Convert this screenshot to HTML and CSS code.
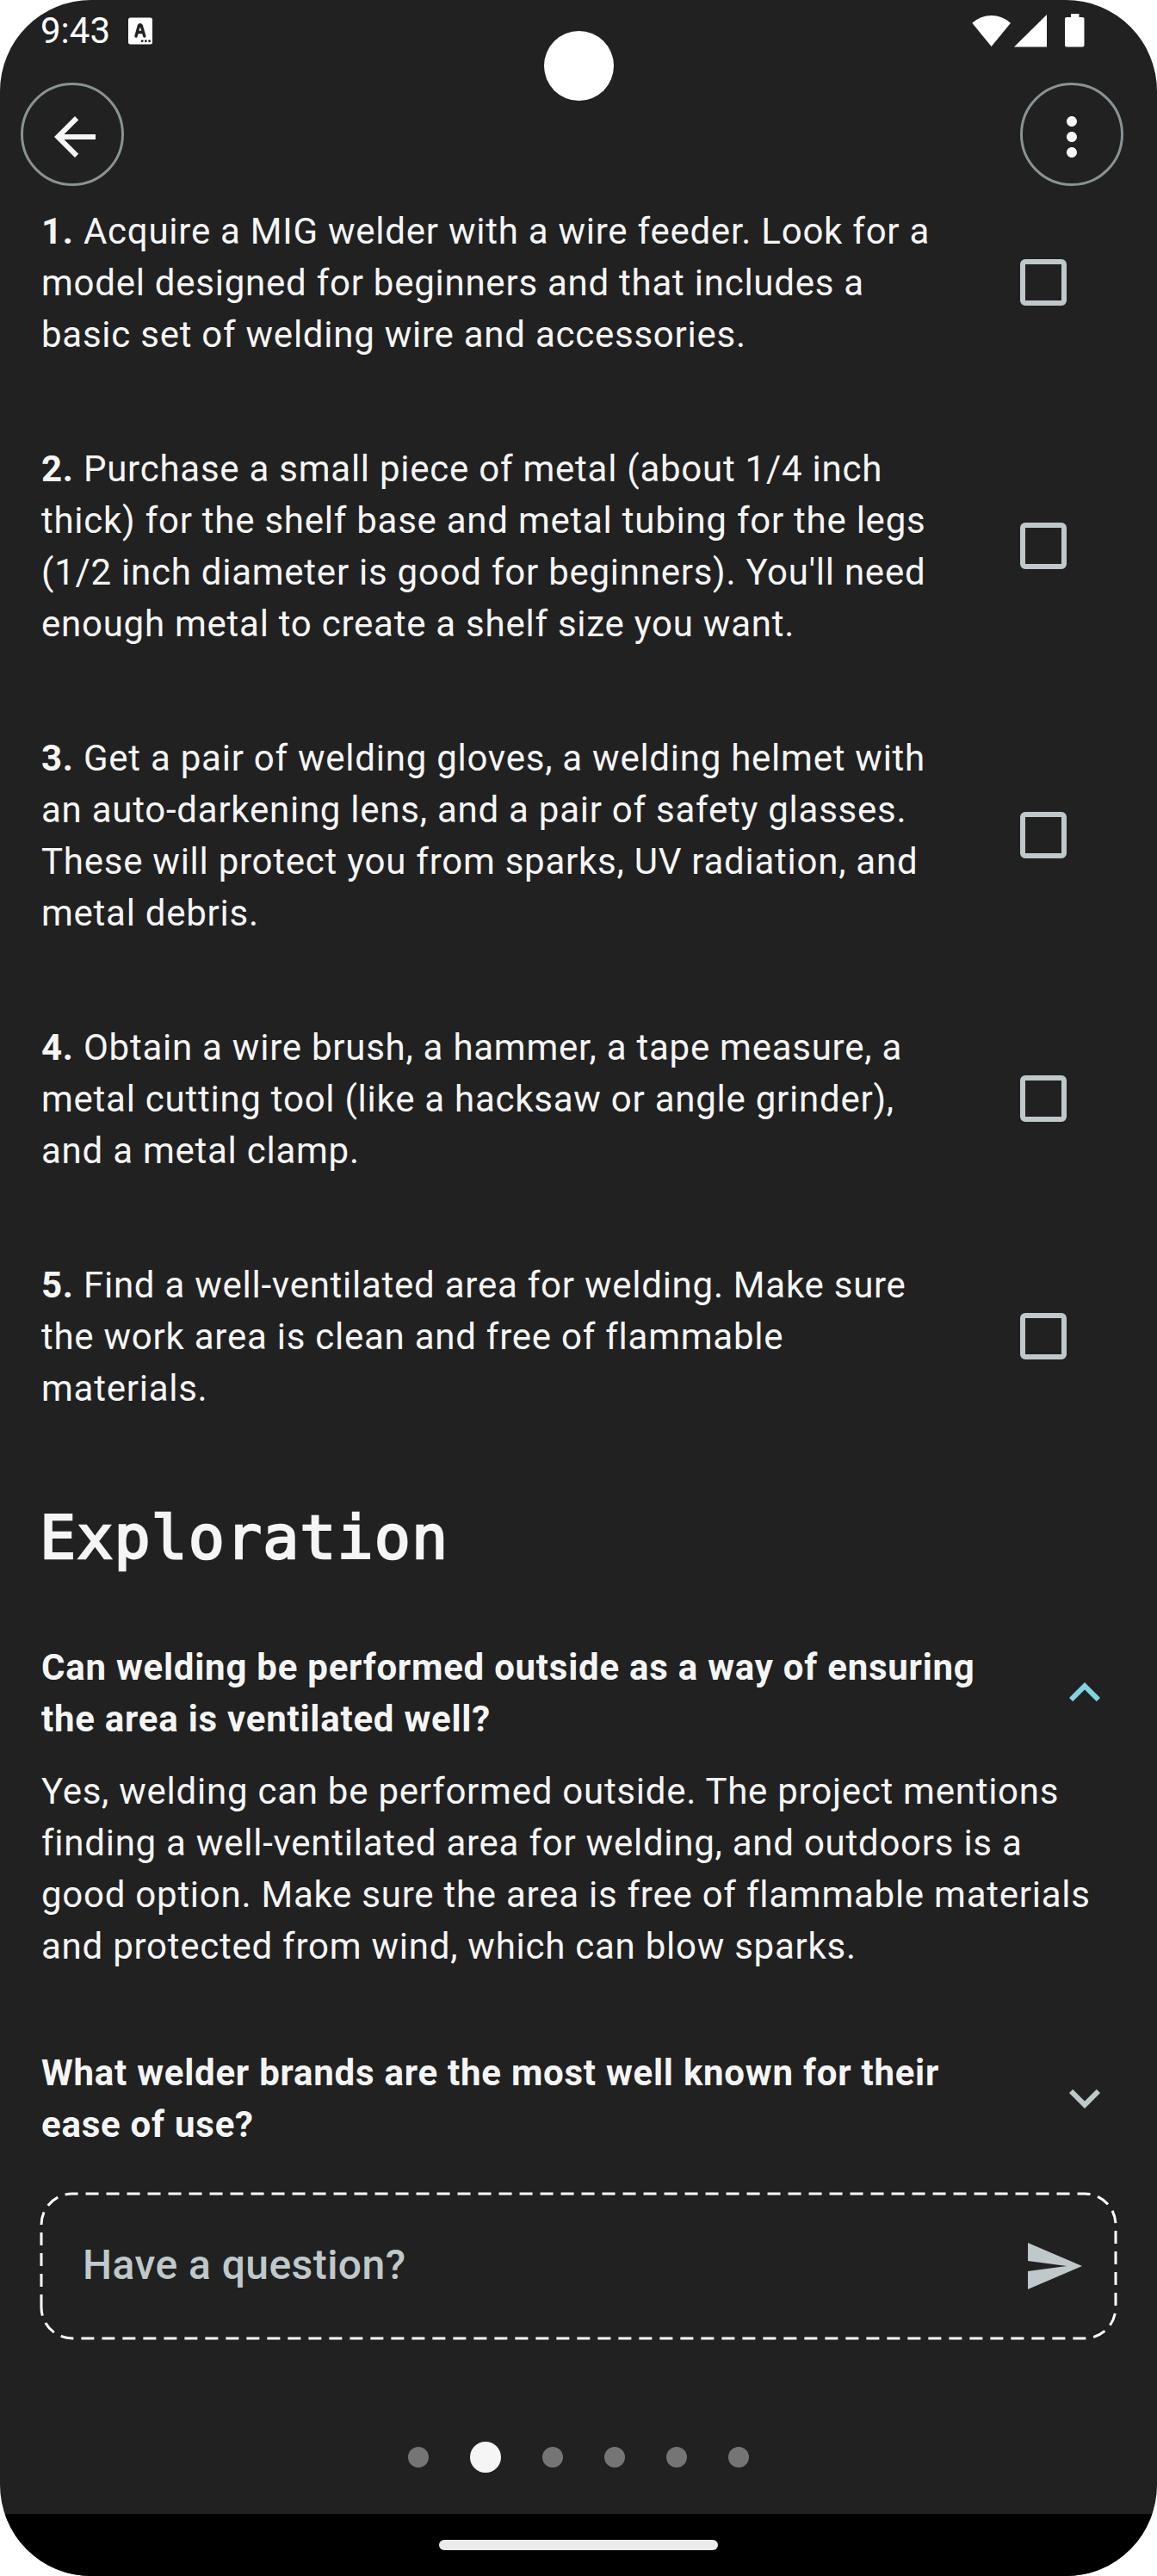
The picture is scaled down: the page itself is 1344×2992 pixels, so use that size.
FILE: index.html
```html
<!DOCTYPE html>
<html lang="en">
<head>
<meta charset="utf-8">
<title>Exploration</title>
<link rel="stylesheet" href="styles.css">
</head>
<body>
<div class="phone">
  <div class="camera"></div>
  <header class="status">
    <span class="clock">9:43</span>
    <svg class="app-badge" viewBox="0 0 28 32"><rect x="0" y="0.5" width="28" height="31" rx="2.5" fill="#fff"/><path d="M9 22 L12.4 9.8 Q13.8 7.8 15.2 9.8 L18.8 22 M10.4 17.5H17.4" fill="none" stroke="#212121" stroke-width="3.4" stroke-linecap="round"/><g fill="#212121"><circle cx="16.2" cy="27.7" r="1.4"/><circle cx="20.4" cy="27.7" r="1.4"/><circle cx="24.6" cy="27.7" r="1.4"/></g></svg>
    <svg class="signals" viewBox="0 0 132 40" fill="#fff"><path d="M0.3 10.8 A33 33 0 0 1 45 10.8 L22.6 38Z"/><path d="M49 38.5 L87 1V38.5Z"/><path d="M115 0h9.500v4h4a2 2 0 0 1 2 2v30.500a2 2 0 0 1 -2 2h-18.500a2 2 0 0 1 -2 -2v-30.500a2 2 0 0 1 2 -2h5z"/></svg>
  </header>
  <nav class="appbar">
    <button class="round" aria-label="Back"><svg viewBox="0 0 24 24"><path d="M20 11H7.830l5.590-5.590L12 4l-8 8 8 8 1.410-1.410L7.830 13H20v-2z"/></svg></button>
    <button class="round more" aria-label="More"><svg viewBox="0 0 24 24"><path d="M12 8c1.100 0 2-.9 2-2s-.9-2-2-2-2 .9-2 2 .9 2 2 2zm0 2c-1.100 0-2 .9-2 2s.9 2 2 2 2-.9 2-2-.9-2-2-2zm0 6c-1.100 0-2 .9-2 2s.9 2 2 2 2-.9 2-2-.9-2-2-2z"/></svg></button>
  </nav>
  <main class="content">
    <ul class="steps">
      <li class="step"><p><b>1.</b> Acquire a MIG welder with a wire feeder. Look for a<br>model designed for beginners and that includes a<br>basic set of welding wire and accessories.</p><span class="check"></span></li>
      <li class="step"><p><b>2.</b> Purchase a small piece of metal (about 1/4 inch<br>thick) for the shelf base and metal tubing for the legs<br>(1/2 inch diameter is good for beginners). You'll need<br>enough metal to create a shelf size you want.</p><span class="check"></span></li>
      <li class="step"><p><b>3.</b> Get a pair of welding gloves, a welding helmet with<br>an auto-darkening lens, and a pair of safety glasses.<br>These will protect you from sparks, UV radiation, and<br>metal debris.</p><span class="check"></span></li>
      <li class="step"><p><b>4.</b> Obtain a wire brush, a hammer, a tape measure, a<br>metal cutting tool (like a hacksaw or angle grinder),<br>and a metal clamp.</p><span class="check"></span></li>
      <li class="step"><p><b>5.</b> Find a well-ventilated area for welding. Make sure<br>the work area is clean and free of flammable<br>materials.</p><span class="check"></span></li>
    </ul>
    <h1 class="heading">Exploration</h1>
    <section class="faq">
      <div class="question"><h2>Can welding be performed outside as a way of ensuring<br>the area is ventilated well?</h2><svg class="chevron open" viewBox="0 0 24 24"><path d="M12 8l-6 6 1.410 1.410L12 10.830l4.590 4.580L18 14z"/></svg></div>
      <p class="answer">Yes, welding can be performed outside. The project mentions<br>finding a well-ventilated area for welding, and outdoors is a<br>good option. Make sure the area is free of flammable materials<br>and protected from wind, which can blow sparks.</p>
      <div class="question"><h2>What welder brands are the most well known for their<br>ease of use?</h2><svg class="chevron" viewBox="0 0 24 24"><path d="M16.590 8.590L12 13.170 7.410 8.590 6 10l6 6 6-6z"/></svg></div>
    </section>
  </main>
  <div class="ask">
    <svg class="dashes" viewBox="0 0 1254 174"><path d="M3 135V39A36 36 0 0 1 39 3H1215A36 36 0 0 1 1251 39V135A36 36 0 0 1 1215 171H39A36 36 0 0 1 3 135"/></svg>
    <span class="hint">Have a question?</span>
    <svg class="send" viewBox="0 0 24 24"><path d="M2.010 21L23 12 2.010 3 2 10l15 2-15 2z"/></svg>
  </div>
  <div class="pager"><i></i><i class="on"></i><i></i><i></i><i></i><i></i></div>
  <footer class="navbar"><div class="handle"></div></footer>
</div>
</body>
</html>
```
FILE: styles.css
```css
* { box-sizing: border-box; }
body { margin: 0; background: #fff; }
.phone {
  position: relative;
  width: 1344px;
  height: 2992px;
  display: flex;
  flex-direction: column;
  overflow: hidden;
  border-radius: 106px;
  background: #212121;
  color: #f5f5f5;
  font: 42px/60px Roboto, sans-serif;
  letter-spacing: 0.75px;
}
.camera {
  position: absolute;
  left: 631.5px;
  top: 35.5px;
  width: 81px;
  height: 81px;
  border-radius: 50%;
  background: #fff;
}
.status { height: 96px; padding: 0 83px 0 47px; display: flex; align-items: flex-start; color: #fff; }
.clock { width: 102px; margin-top: 6px; letter-spacing: 0; }
.app-badge { width: 28px; height: 32px; margin-top: 20px; }
.signals { width: 132px; height: 40px; margin: 16px 0 0 auto; }
.appbar { height: 120px; padding: 0 39px 0 24px; display: flex; justify-content: space-between; }
.round {
  width: 120px;
  height: 120px;
  padding: 6px 0 0 6px;
  display: flex;
  align-items: center;
  justify-content: center;
  border: 3px solid #899294;
  border-radius: 50%;
  background: none;
}
.more { padding-left: 0; }
.round svg { width: 72px; height: 72px; fill: #f5f5f5; }
.content { height: 2329px; padding: 23px 48px 0; }
.steps { margin: 0; padding: 0; display: flex; flex-direction: column; gap: 96px; list-style: none; }
.step { display: flex; align-items: center; justify-content: space-between; padding-right: 57px; white-space: nowrap; }
p { margin: 0; }
b { font-weight: 700; }
.check { width: 54px; height: 54px; margin-bottom: 2px; border: 6px solid #bfc8ca; border-radius: 6px; }
.heading {
  margin: 95px 0 0 -2px;
  font: 400 70px/96px "DejaVu Sans Mono", monospace;
  letter-spacing: 1.05px;
  -webkit-text-stroke: 2.4px #f5f5f5;
}
.faq { margin-top: 73px; white-space: nowrap; }
.question { display: flex; align-items: center; justify-content: space-between; }
h2 { margin: 0; font: inherit; font-weight: 700; }
.chevron { width: 72px; height: 72px; margin-bottom: 2px; fill: #bfc8ca; }
.chevron.open { fill: #82d3e0; }
.answer { margin: 24px 0 87px; }
.ask {
  position: relative;
  flex: none;
  width: 1254px;
  height: 174px;
  margin: 0 45px;
  padding: 0 39px 0 51px;
  display: flex;
  align-items: center;
  justify-content: space-between;
  color: #bfc8ca;
  font-size: 48px;
  font-weight: 500;
  letter-spacing: 0.45px;
}
.hint { margin-bottom: 2px; }
.dashes { position: absolute; inset: 0; width: 1254px; height: 174px; }
.dashes path { fill: none; stroke: #fff; stroke-width: 3; stroke-dasharray: 15 9; }
.send { width: 72px; height: 72px; fill: #bfc8ca; }
.pager { flex: 1; padding-top: 69px; display: flex; align-items: center; justify-content: center; gap: 48px; }
.pager i { width: 24px; height: 24px; border-radius: 50%; background: #757575; }
.pager .on { width: 36px; height: 36px; background: #f5f5f5; }
.navbar { height: 72px; padding-top: 30px; background: #000; }
.handle { width: 324px; height: 12px; margin: 0 auto; border-radius: 6px; background: #ebebeb; }
```
